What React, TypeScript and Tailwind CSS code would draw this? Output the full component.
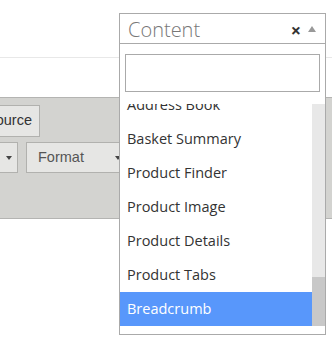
import React from "react";

const items = [
  "Address Book",
  "Basket Summary",
  "Product Finder",
  "Product Image",
  "Product Details",
  "Product Tabs",
  "Breadcrumb",
];

const Caret: React.FC = () => (
  <span className="inline-block w-0 h-0 border-x-[3.5px] border-x-transparent border-t-[4px] border-t-[#444]" />
);

const App: React.FC = () => {
  return (
    <div className="relative w-[332px] h-[346px] overflow-hidden bg-white font-['Liberation_Sans',Arial,sans-serif]">
      {/* page top */}
      <div className="h-[58px] border-b border-[#e8e8e8]" />
      <div className="h-[39px]" />

      {/* editor toolbar */}
      <div className="h-[122px] border-y border-[#b4b4b2] bg-[#d3d3d0] pt-[7px] flex flex-col gap-[5px]">
        <div className="flex">
          <div className="ml-[-22px] w-[62px] h-[32px] border border-[#b1b1ae] bg-[#e6e6e4] flex items-center justify-end pr-[7px] text-[14.5px] text-[#333]">
            Source
          </div>
        </div>
        <div className="flex gap-[8px]">
          <div className="ml-[-20px] w-[38px] h-[31px] border border-[#b1b1ae] bg-[#e6e6e4] flex items-center justify-end pr-[5px]">
            <Caret />
          </div>
          <div className="w-[100px] h-[31px] border border-[#b1b1ae] bg-[#e6e6e4] flex items-center justify-between pl-[11px] pr-[4px] text-[14.5px] text-[#555]">
            <span>Format</span>
            <Caret />
          </div>
        </div>
      </div>

      {/* select dropdown */}
      <div className="absolute left-[119px] top-[13px] w-[207px] h-[322px] border border-[#aaa] bg-white flex flex-col font-['Open_Sans',sans-serif]">
        <div className="h-[30px] shrink-0 border-b border-[#aaa] flex items-center pl-[8px] pr-[9px] pt-[3px]">
          <span className="flex-1 text-[20px] font-light text-[#777] leading-none">Content</span>
          <span className="text-[18px] font-bold text-[#333] leading-none mr-[7px]">×</span>
          <span className="w-0 h-0 border-x-[4px] border-x-transparent border-b-[6px] border-b-[#999] mb-[2px]" />
        </div>
        <div className="px-[5px] pt-[10px] shrink-0">
          <div className="h-[38px] border border-[#aaa]" />
        </div>
        <div className="mt-[12px] h-[222px] flex overflow-hidden">
          <div className="flex-1 relative overflow-hidden">
            <div className="absolute left-0 right-0 bottom-0 flex flex-col">
              {items.map((item) => (
                <div
                  key={item}
                  className={`h-[34px] flex items-center pl-[7px] text-[14.5px] ${
                    item === "Breadcrumb" ? "bg-[#5897fb] text-white" : "text-[#333]"
                  }`}
                >
                  {item}
                </div>
              ))}
            </div>
          </div>
          <div className="w-[13px] -mt-[2px] bg-[#e8e8e8] flex flex-col justify-end">
            <div className="h-[49px] bg-[#c8c8c8]" />
          </div>
        </div>
      </div>
    </div>
  );
};

export default App;
